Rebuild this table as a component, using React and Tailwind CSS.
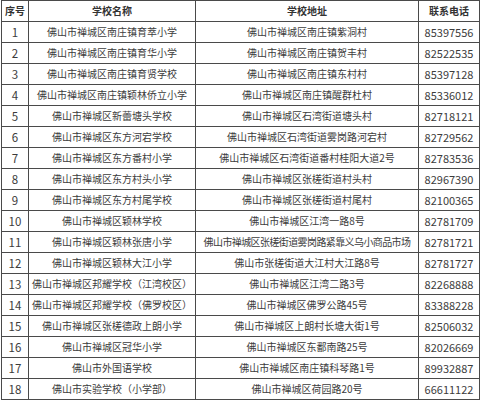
const rows = [
  ["1", "佛山市禅城区南庄镇育萃小学", "佛山市禅城区南庄镇紫洞村", "85397556"],
  ["2", "佛山市禅城区南庄镇育华小学", "佛山市禅城区南庄镇贺丰村", "82522535"],
  ["3", "佛山市禅城区南庄镇育贤学校", "佛山市禅城区南庄镇东村村", "85397128"],
  ["4", "佛山市禅城区南庄镇颖林侨立小学", "佛山市禅城区南庄镇醒群杜村", "85336012"],
  ["5", "佛山市禅城区新蕾塘头学校", "佛山市禅城区石湾街道塘头村", "82718121"],
  ["6", "佛山市禅城区东方河宕学校", "佛山市禅城区石湾街道雾岗路河宕村", "82729562"],
  ["7", "佛山市禅城区东方番村小学", "佛山市禅城区石湾街道番村桂阳大道2号", "82783536"],
  ["8", "佛山市禅城区东方村头小学", "佛山市禅城区张槎街道村头村", "82967390"],
  ["9", "佛山市禅城区东方村尾学校", "佛山市禅城区张槎街道村尾村", "82100365"],
  ["10", "佛山市禅城区颖林学校", "佛山市禅城区江湾一路8号", "82781709"],
  ["11", "佛山市禅城区颖林张唐小学", "佛山市禅城区张槎街道雾岗路紧靠义乌小商品市场", "82781721"],
  ["12", "佛山市禅城区颖林大江小学", "佛山市张槎街道大江村大江路8号", "82781727"],
  ["13", "佛山市禅城区邦耀学校（江湾校区）", "佛山市禅城区江湾二路3号", "82268888"],
  ["14", "佛山市禅城区邦耀学校（佛罗校区）", "佛山市禅城区佛罗公路45号", "83388228"],
  ["15", "佛山市禅城区张槎德政上朗小学", "佛山市禅城区上朗村长塘大街1号", "82506032"],
  ["16", "佛山市禅城区冠华小学", "佛山市禅城区东鄱南路25号", "82026669"],
  ["17", "佛山市外国语学校", "佛山市禅城区南庄镇科琴路1号", "89932887"],
  ["18", "佛山市实验学校（小学部）", "佛山市禅城区荷园路20号", "66611122"],
];

const cell = "border border-[#4a4a4a] p-0 h-[21px] text-center whitespace-nowrap overflow-hidden";

export default function App() {
  return (
    <div className="w-[480px] h-[400px] bg-white overflow-hidden font-['Noto_Sans_CJK_SC',sans-serif] text-[10px] leading-[20px] text-[#3c3c3c]">
      <table className="table-fixed border-collapse ml-[1px] w-[478px]">
        <colgroup>
          <col className="w-[27px]" />
          <col className="w-[167px]" />
          <col className="w-[223px]" />
          <col className="w-[61px]" />
        </colgroup>
        <thead>
          <tr className="font-bold text-[#333]">
            <th className={cell}>序号</th>
            <th className={cell}>学校名称</th>
            <th className={cell}>学校地址</th>
            <th className={cell}>联系电话</th>
          </tr>
        </thead>
        <tbody>
          {rows.map((r) => (
            <tr key={r[0]}>
              <td className={`${cell} text-[11.5px]`}>{r[0]}</td>
              <td className={cell}>{r[1]}</td>
              <td className={r[0] === "11" ? `${cell} tracking-[-0.6px]` : cell}>{r[2]}</td>
              <td className={`${cell} text-[11px]`}>{r[3]}</td>
            </tr>
          ))}
        </tbody>
      </table>
    </div>
  );
}
